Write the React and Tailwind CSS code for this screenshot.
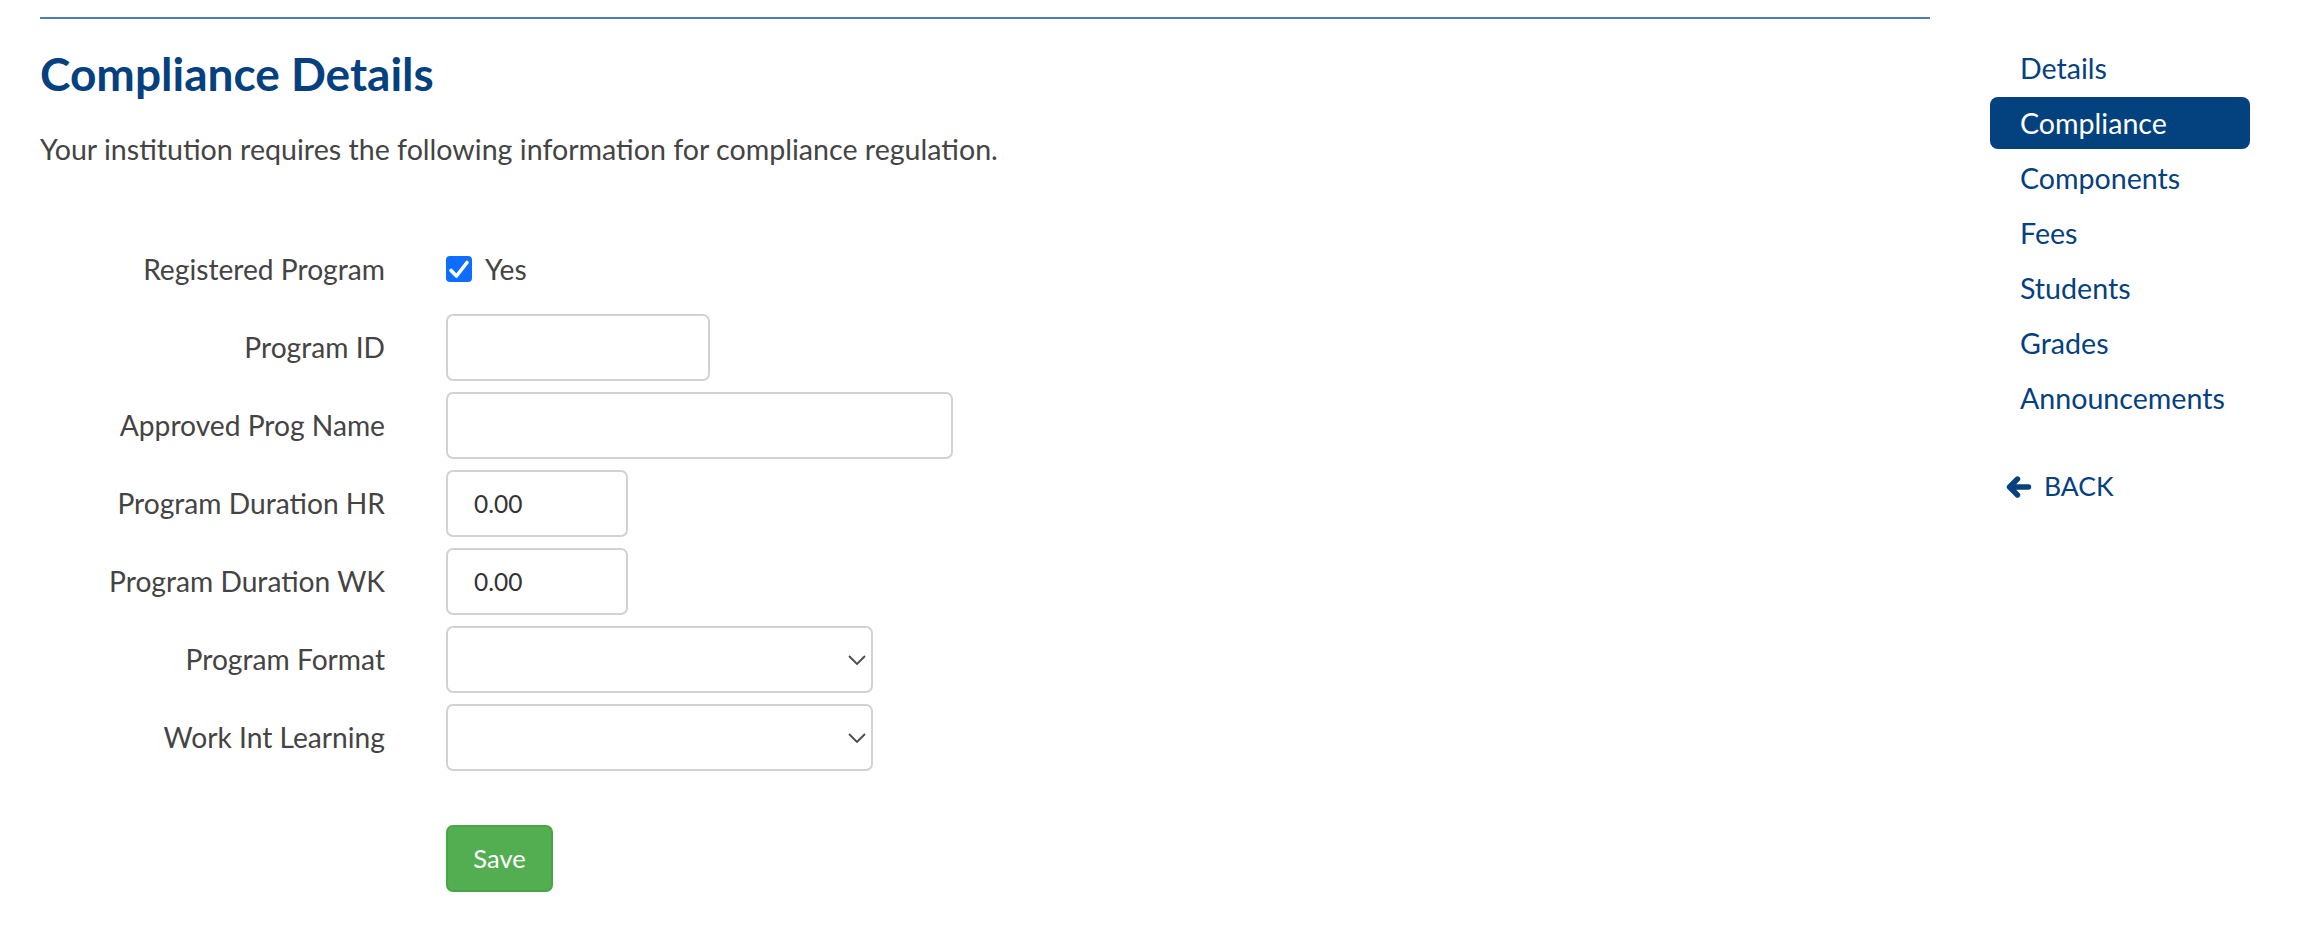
import React, { useState } from 'react';

const navItems = ['Details', 'Compliance', 'Components', 'Fees', 'Students', 'Grades', 'Announcements'];

const Chevron = () => (
  <svg width="18" height="10" viewBox="0 0 18 10" className="absolute right-[7px] top-1/2 -translate-y-1/2 pointer-events-none">
    <path d="M1 1 L9 9 L17 1" fill="none" stroke="#4a4a4a" strokeWidth="1.8" />
  </svg>
);

const BackArrow = () => (
  <svg width="26" height="22" viewBox="0 0 26 22">
    <path d="M11.5 3 L3.5 11 L11.5 19 M4 11 H22.5" fill="none" stroke="currentColor" strokeWidth="5.4" strokeLinecap="round" strokeLinejoin="round" />
  </svg>
);

const Row = ({ label, children }) => (
  <div className="flex items-center h-[67px]">
    <label className="w-[345px] text-right text-[28.2px] text-[#444]">{label}</label>
    <div className="ml-[61px] flex items-center h-full">{children}</div>
  </div>
);

const inputCls =
  'h-[67px] border-2 border-[#d2d2d2] rounded-[7px] px-[26px] text-[24.5px] text-[#333] bg-white focus:outline-none';

const App = () => {
  const [registered, setRegistered] = useState(true);
  const [programId, setProgramId] = useState('');
  const [progName, setProgName] = useState('');
  const [hr, setHr] = useState('0.00');
  const [wk, setWk] = useState('0.00');

  return (
    <div className="min-h-screen bg-white flex pl-[40px]" style={{ fontFamily: 'Lato, "Open Sans", sans-serif' }}>
      <div className="w-[1890px] mt-[17px] border-t-2 border-[#4f7db3]">
        <h2 className="mt-[28px] text-[46px] leading-[54px] font-bold text-[#05417f]">Compliance Details</h2>
        <p className="mt-[28px] text-[28.6px] leading-[40px] text-[#444]">
          Your institution requires the following information for compliance regulation.
        </p>

        <form className="mt-[67px] flex flex-col gap-[11px]" onSubmit={(e) => e.preventDefault()}>
          <Row label="Registered Program">
            <label className="flex items-center gap-[13px] text-[28.2px] text-[#444]">
              <span
                onClick={() => setRegistered(!registered)}
                className={`w-[26px] h-[26px] rounded-[4px] flex items-center justify-center ${registered ? 'bg-[#0d6efd]' : 'border-2 border-[#bbb]'}`}
              >
                {registered && (
                  <svg width="26" height="26" viewBox="0 0 26 26">
                    <path d="M5 14.5 L10.5 20 L21 6.5" fill="none" stroke="#fff" strokeWidth="3.6" strokeLinecap="round" strokeLinejoin="round" />
                  </svg>
                )}
              </span>
              Yes
            </label>
          </Row>
          <Row label="Program ID">
            <input className={`${inputCls} w-[264px]`} value={programId} onChange={(e) => setProgramId(e.target.value)} />
          </Row>
          <Row label="Approved Prog Name">
            <input className={`${inputCls} w-[507px]`} value={progName} onChange={(e) => setProgName(e.target.value)} />
          </Row>
          <Row label="Program Duration HR">
            <input className={`${inputCls} w-[182px]`} value={hr} onChange={(e) => setHr(e.target.value)} />
          </Row>
          <Row label="Program Duration WK">
            <input className={`${inputCls} w-[182px]`} value={wk} onChange={(e) => setWk(e.target.value)} />
          </Row>
          <Row label="Program Format">
            <div className="relative">
              <select className={`${inputCls} w-[427px] appearance-none`}>
                <option></option>
              </select>
              <Chevron />
            </div>
          </Row>
          <Row label="Work Int Learning">
            <div className="relative">
              <select className={`${inputCls} w-[427px] appearance-none`}>
                <option></option>
              </select>
              <Chevron />
            </div>
          </Row>
          <div className="ml-[406px] mt-[43px]">
            <button
              type="submit"
              className="w-[107px] h-[67px] bg-[#52ae50] border-2 border-[#48a646] rounded-[7px] text-white text-[25.5px]"
            >
              Save
            </button>
          </div>
        </form>
      </div>

      <nav className="ml-[60px] w-[260px] mt-[42px] flex flex-col gap-[3px]">
        {navItems.map((item) => (
          <a
            key={item}
            href="#"
            className={`h-[52px] flex items-center pl-[30px] rounded-[8px] text-[28.6px] ${item === 'Compliance' ? 'bg-[#03427f] text-white' : 'text-[#05417f]'}`}
          >
            {item}
          </a>
        ))}
        <a href="#" className="mt-[34px] h-[52px] flex items-center pl-[16px] gap-[12px] text-[26.5px] text-[#05417f]">
          <BackArrow />
          BACK
        </a>
      </nav>
    </div>
  );
};

export default App;
